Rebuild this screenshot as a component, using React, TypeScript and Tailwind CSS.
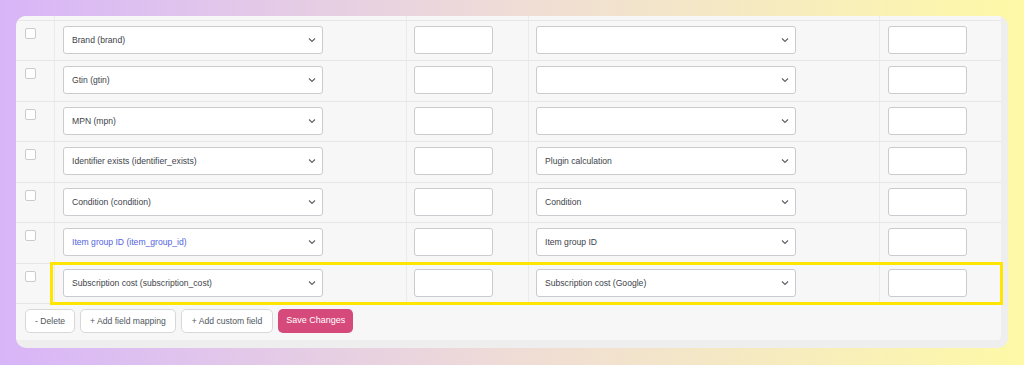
import { ReactNode } from 'react';

const rows = [
  { field: 'Brand (brand)', source: '' },
  { field: 'Gtin (gtin)', source: '' },
  { field: 'MPN (mpn)', source: '' },
  { field: 'Identifier exists (identifier_exists)', source: 'Plugin calculation' },
  { field: 'Condition (condition)', source: 'Condition' },
  { field: 'Item group ID (item_group_id)', source: 'Item group ID', link: true },
  { field: 'Subscription cost (subscription_cost)', source: 'Subscription cost (Google)', highlight: true },
];

const Chevron = () => (
  <svg width="8" height="5" viewBox="0 0 8 5" className="absolute right-[6px] top-1/2 -translate-y-1/2">
    <path d="M1 1l3 3 3-3" fill="none" stroke="#5a6066" strokeWidth="1.1" />
  </svg>
);

const Select = ({ value, link }: { value: string; link?: boolean }) => (
  <div className="relative flex h-[28px] w-[260px] items-center rounded-[3px] border border-[#c9cbce] bg-white pl-[8px] pt-[1px]">
    <span className={link ? 'text-[#5264de]' : 'text-[#3c434a]'}>{value}</span>
    <Chevron />
  </div>
);

const Input = () => <div className="h-[28px] w-[79px] rounded-[3px] border border-[#c9cbce] bg-white" />;

const Cell = ({ children, className = '' }: { children?: ReactNode; className?: string }) => (
  <div className={`border-l border-[#ebebeb] ${className}`}>{children}</div>
);

const grid = 'grid grid-cols-[38px_352px_122px_351px_122px]';

const App = () => {
  return (
    <div className="h-[365px] w-[1024px] bg-linear-to-r from-[#d8b5f8] via-[#efdcd6] to-[#fdf9a6] pl-4 pt-4 font-['Liberation_Sans',Arial,sans-serif] text-[8.6px]">
      <div className="h-[332px] w-[992px] overflow-hidden rounded-[10px] bg-[#eeeeee] pb-[8px] pr-[7px]">
        <div className="flex h-full flex-col rounded-br-[4px] bg-[#f7f7f7]">
          <div className={`${grid} h-[4px]`}>
            <div />
            <Cell />
            <Cell />
            <Cell />
            <Cell />
          </div>

          {rows.map((row) => (
            <div key={row.field} className={`${grid} relative h-[40.43px] border-t border-[#e6e6e6]`}>
              <div className="pl-[9px] pt-[7px]">
                <div className="h-[11px] w-[11px] rounded-[2px] border border-[#c9cbce] bg-white" />
              </div>
              <Cell className="pl-[8px] pt-[5px]">
                <Select value={row.field} link={row.link} />
              </Cell>
              <Cell className="pl-[7px] pt-[5px]">
                <Input />
              </Cell>
              <Cell className="pl-[7px] pt-[5px]">
                <Select value={row.source} />
              </Cell>
              <Cell className="pl-[8px] pt-[5px]">
                <Input />
              </Cell>
              {row.highlight && (
                <div className="pointer-events-none absolute -top-[2px] left-[34px] h-[43px] w-[953px] border-[3px] border-[#ffe500]" />
              )}
            </div>
          ))}

          <div className="flex gap-[5px] border-t border-[#e6e6e6] pl-[9px] pt-[5px]">
            <button className="h-[24px] rounded-[5px] border border-[#d8d8d8] bg-white px-[9px] text-[#50575e]">- Delete</button>
            <button className="h-[24px] rounded-[5px] border border-[#d8d8d8] bg-white px-[9px] text-[#50575e]">+ Add field mapping</button>
            <button className="h-[24px] rounded-[5px] border border-[#d8d8d8] bg-white px-[10px] text-[#50575e]">+ Add custom field</button>
            <button className="h-[24px] rounded-[5px] bg-[#d6497b] px-[8px] text-[9px] text-white">Save Changes</button>
          </div>
        </div>
      </div>
    </div>
  );
};

export default App;
